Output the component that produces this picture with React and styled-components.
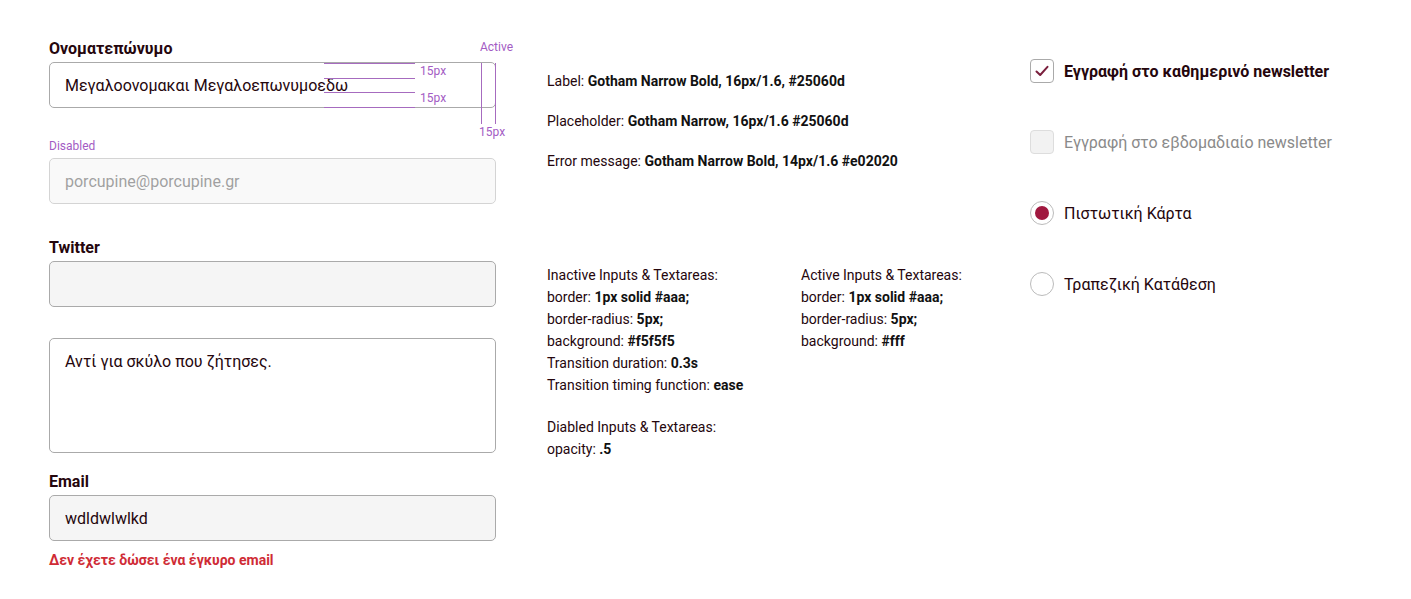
import styled, { createGlobalStyle } from 'styled-components';

const GlobalStyle = createGlobalStyle`
  body {
    margin: 0;
    background: #fff;
    font-family: Roboto, "Noto Sans", sans-serif;
    color: #25060d;
  }
`;

function Annotations() {
  return (
    <>
      <Note $left={431} $top={-23}>Active</Note>
      <HLine $top={1} />
      <HLine $top={16} />
      <HLine $top={30} />
      <HLine $top={45} />
      <Note $left={371} $top={1}>15px</Note>
      <Note $left={371} $top={28}>15px</Note>
      <VLine $left={432} />
      <VLine $left={446} />
      <Note $left={430} $top={62}>15px</Note>
    </>
  );
}

function Checkbox({ checked, disabled, children }) {
  return (
    <Choice>
      <CheckBox $disabled={disabled}>
        {checked && (
          <svg width="14" height="12" viewBox="0 0 14 12">
            <path d="M1.5 6.5 L5.2 10 L12.5 1.8" fill="none" stroke="#7a1f3d" strokeWidth="2" strokeLinecap="round" strokeLinejoin="round" />
          </svg>
        )}
      </CheckBox>
      <ChoiceText $bold={checked} $muted={disabled}>{children}</ChoiceText>
    </Choice>
  );
}

function Radio({ checked, children }) {
  return (
    <Choice>
      <RadioCircle>{checked && <RadioDot />}</RadioCircle>
      <ChoiceText>{children}</ChoiceText>
    </Choice>
  );
}

function App() {
  return (
    <Page>
      <GlobalStyle />
      <FormColumn>
        <Field>
          <Label>Ονοματεπώνυμο</Label>
          <InputWrap>
            <Input $active readOnly value="Μεγαλοονομακαι Μεγαλοεπωνυμοεδω" />
            <Annotations />
          </InputWrap>
        </Field>
        <Field $mt={28}>
          <StateTag>Disabled</StateTag>
          <Input disabled value="porcupine@porcupine.gr" readOnly />
        </Field>
        <Field $mt={31}>
          <Label>Twitter</Label>
          <Input readOnly value="" />
        </Field>
        <Field $mt={31}>
          <TextArea $active readOnly value="Αντί για σκύλο που ζήτησες." />
        </Field>
        <Field $mt={16}>
          <Label>Email</Label>
          <Input readOnly value="wdldwlwlkd" />
          <ErrorText>Δεν έχετε δώσει ένα έγκυρο email</ErrorText>
        </Field>
      </FormColumn>

      <SpecColumn>
        <SpecList>
          <SpecLine>Label: <b>Gotham Narrow Bold, 16px/1.6, #25060d</b></SpecLine>
          <SpecLine>Placeholder: <b>Gotham Narrow, 16px/1.6 #25060d</b></SpecLine>
          <SpecLine>Error message: <b>Gotham Narrow Bold, 14px/1.6 #e02020</b></SpecLine>
        </SpecList>
        <SpecGrid>
          <SpecBlock>
            <SpecRow>Inactive Inputs &amp; Textareas:</SpecRow>
            <SpecRow>border: <b>1px solid #aaa;</b></SpecRow>
            <SpecRow>border-radius: <b>5px;</b></SpecRow>
            <SpecRow>background: <b>#f5f5f5</b></SpecRow>
            <SpecRow>Transition duration: <b>0.3s</b></SpecRow>
            <SpecRow>Transition timing function: <b>ease</b></SpecRow>
            <SpecRow $mt={20}>Diabled Inputs &amp; Textareas:</SpecRow>
            <SpecRow>opacity: <b>.5</b></SpecRow>
          </SpecBlock>
          <SpecBlock>
            <SpecRow>Active Inputs &amp; Textareas:</SpecRow>
            <SpecRow>border: <b>1px solid #aaa;</b></SpecRow>
            <SpecRow>border-radius: <b>5px;</b></SpecRow>
            <SpecRow>background: <b>#fff</b></SpecRow>
          </SpecBlock>
        </SpecGrid>
      </SpecColumn>

      <ChoiceColumn>
        <Checkbox checked>Εγγραφή στο καθημερινό newsletter</Checkbox>
        <Checkbox disabled>Εγγραφή στο εβδομαδιαίο newsletter</Checkbox>
        <Radio checked>Πιστωτική Κάρτα</Radio>
        <Radio>Τραπεζική Κατάθεση</Radio>
      </ChoiceColumn>
    </Page>
  );
}

const Page = styled.main`
  display: grid;
  grid-template-columns: 447px 432px 1fr;
  column-gap: 51px;
  padding: 36px 0 0 49px;
  align-items: start;
`;

const FormColumn = styled.section`
  display: flex;
  flex-direction: column;
`;

const Field = styled.div`
  display: flex;
  flex-direction: column;
  margin-top: ${p => p.$mt || 0}px;
`;

const Label = styled.label`
  font-size: 16px;
  font-weight: 700;
  line-height: 26px;
  color: #25060d;
`;

const StateTag = styled.span`
  font-size: 12px;
  line-height: 20px;
  color: #a35cc4;
  margin-bottom: 2px;
`;

const InputWrap = styled.div`
  position: relative;
`;

const Input = styled.input`
  box-sizing: border-box;
  width: 100%;
  height: 46px;
  padding: 0 15px;
  border: 1px solid #aaa;
  border-radius: 5px;
  background: ${p => (p.$active ? '#fff' : '#f5f5f5')};
  font-family: Roboto, "Noto Sans", sans-serif;
  font-size: 16px;
  color: #25060d;
  outline: none;
  transition: all 0.3s ease;

  &:disabled {
    opacity: 0.5;
    color: #444;
  }
`;

const TextArea = styled.textarea`
  box-sizing: border-box;
  width: 100%;
  height: 115px;
  padding: 10px 15px;
  border: 1px solid #aaa;
  border-radius: 5px;
  background: ${p => (p.$active ? '#fff' : '#f5f5f5')};
  font-family: Roboto, "Noto Sans", sans-serif;
  font-size: 16px;
  line-height: 1.6;
  color: #25060d;
  resize: none;
  outline: none;
  display: block;
`;

const ErrorText = styled.p`
  margin: 8px 0 0;
  font-size: 14px;
  font-weight: 700;
  line-height: 22px;
  color: #cf2b35;
`;

const HLine = styled.span`
  position: absolute;
  left: 275px;
  width: 91px;
  top: ${p => p.$top}px;
  height: 1px;
  background: #a66bbf;
`;

const VLine = styled.span`
  position: absolute;
  left: ${p => p.$left}px;
  top: 1px;
  width: 1px;
  height: 61px;
  background: #a66bbf;
`;

const Note = styled.span`
  position: absolute;
  left: ${p => p.$left}px;
  top: ${p => p.$top}px;
  font-size: 12px;
  line-height: 16px;
  color: #a35cc4;
`;

const SpecColumn = styled.section`
  padding-top: 34px;
  font-size: 14px;
  color: #25060d;

  b {
    font-weight: 700;
    color: #111;
  }
`;

const SpecList = styled.div`
  display: flex;
  flex-direction: column;
  gap: 18px;
`;

const SpecLine = styled.div`
  line-height: 22px;
`;

const SpecGrid = styled.div`
  display: grid;
  grid-template-columns: 254px 1fr;
  margin-top: 92px;
`;

const SpecBlock = styled.div`
  display: flex;
  flex-direction: column;
`;

const SpecRow = styled.div`
  line-height: 22px;
  margin-top: ${p => p.$mt || 0}px;
`;

const ChoiceColumn = styled.section`
  display: flex;
  flex-direction: column;
  gap: 47px;
  padding-top: 23px;
`;

const Choice = styled.label`
  display: flex;
  align-items: center;
  gap: 10px;
  height: 24px;
`;

const CheckBox = styled.span`
  box-sizing: border-box;
  width: 24px;
  height: 24px;
  border-radius: 4px;
  border: 1px solid ${p => (p.$disabled ? '#ddd' : '#aaa')};
  background: ${p => (p.$disabled ? '#f2f2f2' : '#fff')};
  display: flex;
  align-items: center;
  justify-content: center;
`;

const RadioCircle = styled.span`
  box-sizing: border-box;
  width: 24px;
  height: 24px;
  border-radius: 50%;
  border: 1px solid #bbb;
  background: #fff;
  display: flex;
  align-items: center;
  justify-content: center;
`;

const RadioDot = styled.span`
  width: 14px;
  height: 14px;
  border-radius: 50%;
  background: #a0183f;
`;

const ChoiceText = styled.span`
  font-size: 16px;
  font-weight: ${p => (p.$bold ? 700 : 400)};
  color: ${p => (p.$muted ? '#8a8a8a' : '#25060d')};
`;

export default App;
